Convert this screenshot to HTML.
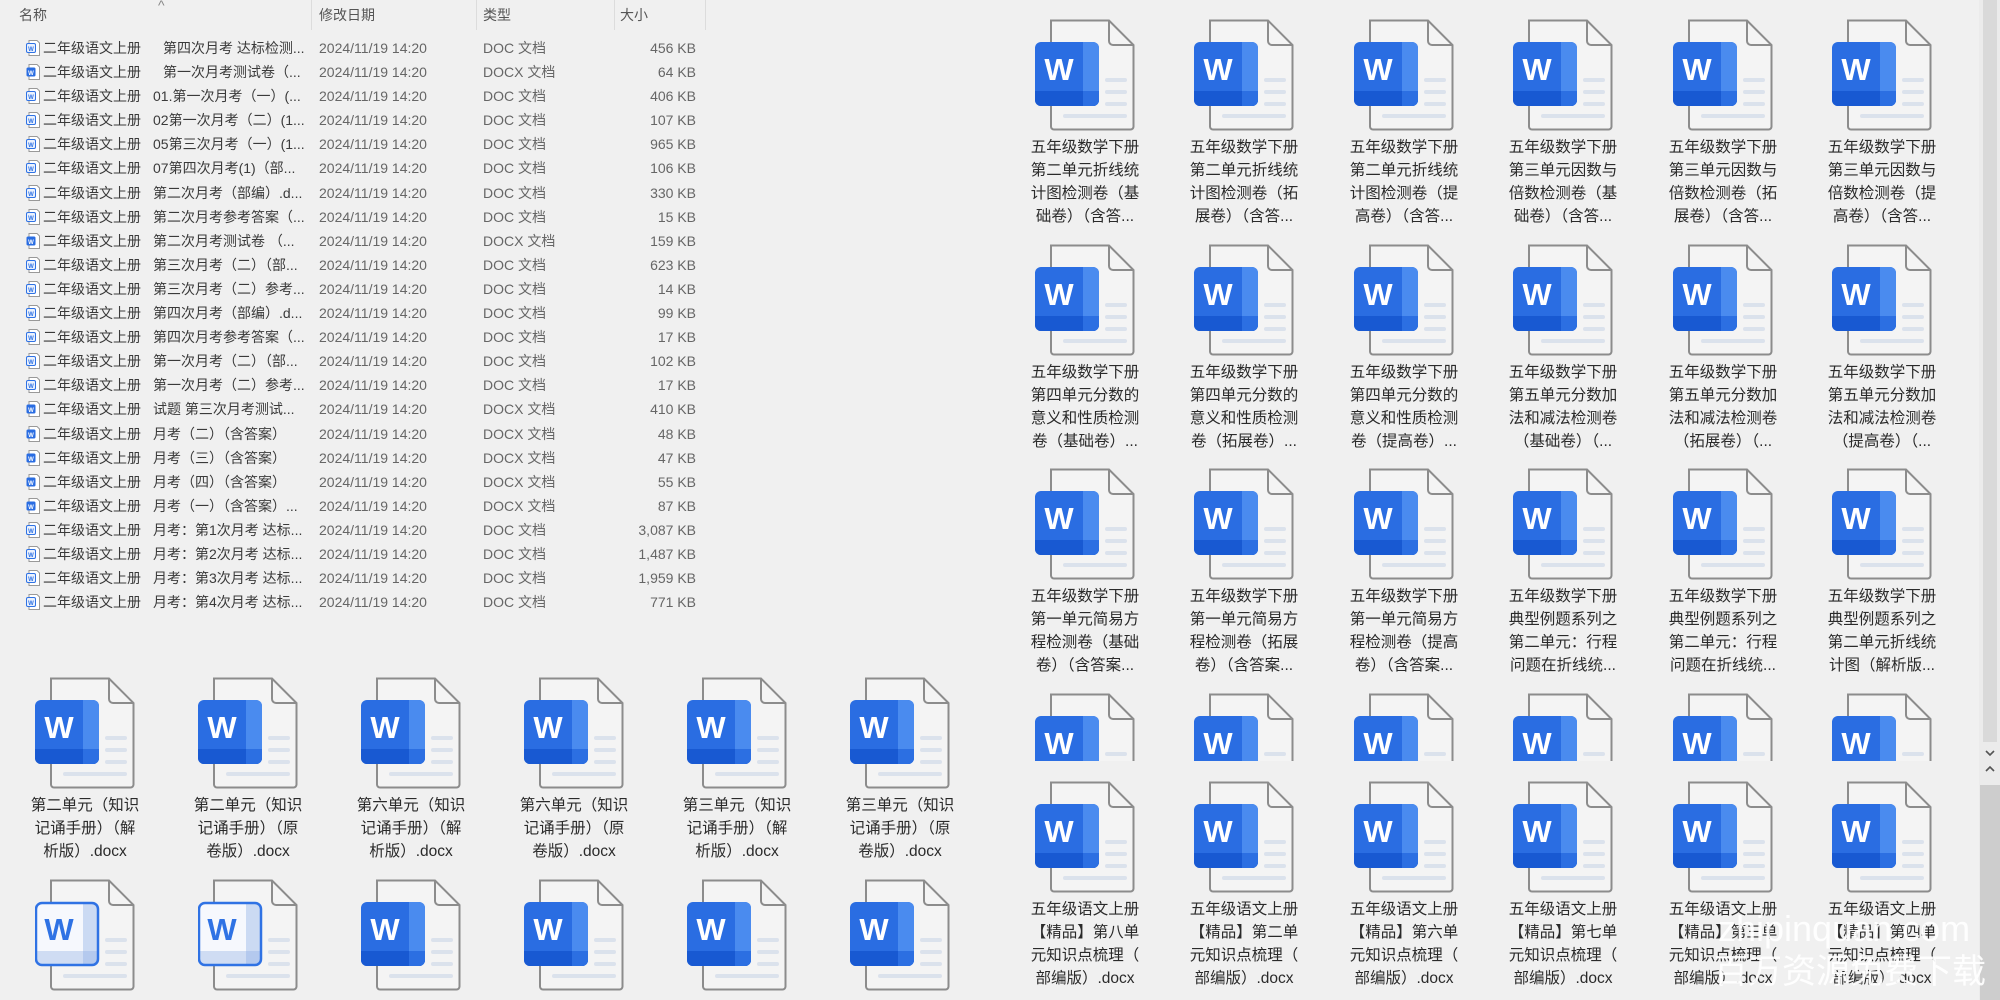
<!DOCTYPE html>
<html style="overflow:hidden"><head><meta charset="utf-8">
<style>
html,body{overflow:hidden}
body{margin:0;width:2000px;height:1000px;background:#f0f0f0;position:relative;overflow:hidden;font-family:"Liberation Sans","Noto Sans CJK SC",sans-serif;}
.hd{position:absolute;top:6px;font-size:14px;color:#555;line-height:18px}
.sep{position:absolute;top:0;width:1px;height:30px;background:#dcdcdc}
#list{position:absolute;top:36px;left:0;width:720px}
.r{position:relative;height:24.1px;line-height:24px;font-size:14px;color:#3a3a3a;white-space:nowrap}
.r span{position:absolute;top:0}
.r .d,.r .t{color:#666}
.r .s{right:24px;color:#666}
.r svg{position:absolute;left:26px;top:4px}
.it{position:absolute;width:170px;text-align:center}
.it svg{display:block;margin:0 auto}
.it div{margin-top:5px;font-size:15.5px;line-height:23px;color:#2a2a2a}
.clip{position:absolute;overflow:hidden}
.wm{position:absolute;white-space:nowrap;color:rgba(255,255,255,0.92);line-height:44px}
</style></head><body>
<svg width="0" height="0" style="position:absolute">
<defs>
<clipPath id="cr"><rect x="0" y="23" width="64" height="64" rx="6"/></clipPath>
<symbol id="pg" viewBox="0 0 100 112">
<path d="M16 1.5H74L98.5 26V107.5a3 3 0 0 1-3 3H19a3 3 0 0 1-3-3Z" fill="#f4f4f4" stroke="#8c8c8c" stroke-width="2"/>
<path d="M74 1.5V22a4 4 0 0 0 4 4H98.5" fill="none" stroke="#8c8c8c" stroke-width="2"/>
<rect x="70" y="59" width="22" height="4" rx="2" fill="#dbe2ec"/>
<rect x="70" y="71" width="22" height="4" rx="2" fill="#dbe2ec"/>
<rect x="70" y="83" width="22" height="4" rx="2" fill="#dbe2ec"/>
<rect x="28" y="95" width="64" height="4" rx="2" fill="#dbe2ec"/>
</symbol>
<symbol id="bw" viewBox="0 0 100 112">
<g clip-path="url(#cr)">
<rect x="0" y="23" width="64" height="64" fill="#2a6de2"/>
<rect x="48" y="23" width="16" height="64" fill="#4a8bef"/>
<rect x="0" y="72" width="64" height="15" fill="#1859d2"/>
<rect x="48" y="72" width="16" height="15" fill="#2c6fe2"/>
</g>
</symbol>
<symbol id="bo" viewBox="0 0 100 112">
<g clip-path="url(#cr)">
<rect x="0" y="23" width="64" height="64" fill="#f6f8fd"/>
<rect x="48" y="23" width="16" height="64" fill="#cbdaf3"/>
<rect x="0" y="72" width="64" height="15" fill="#cfdcf3"/>
<rect x="48" y="72" width="16" height="15" fill="#b4c9ee"/>
</g>
<rect x="1" y="24" width="62" height="62" rx="6" fill="none" stroke="#2f72e4" stroke-width="2.5"/>
</symbol>
<symbol id="sd" viewBox="0 0 14 16">
<path d="M3 .5H11L13.5 3V15.5H3Z" fill="#fff" stroke="#999" stroke-width="1"/>
<rect x=".5" y="3.5" width="9" height="9" rx="1.5" fill="#eaf1fd" stroke="#2f72e4"/>
</symbol>
<symbol id="sx" viewBox="0 0 14 16">
<path d="M3 .5H11L13.5 3V15.5H3Z" fill="#fff" stroke="#999" stroke-width="1"/>
<rect x=".5" y="3.5" width="9" height="9" rx="1.5" fill="#2a6de2"/>
</symbol>
</defs></svg>

<div class="hd" style="left:19px">名称</div>
<div class="hd" style="left:158px;top:-4px;color:#888">^</div>
<div class="hd" style="left:319px">修改日期</div>
<div class="hd" style="left:483px">类型</div>
<div class="hd" style="left:620px">大小</div>
<div class="sep" style="left:311px"></div><div class="sep" style="left:476px"></div><div class="sep" style="left:614px"></div><div class="sep" style="left:705px"></div>

<div id="list">
<div class="r"><svg width="14" height="16"><use href="#sd"/><text x="5" y="11" font-size="6" font-weight="bold" fill="#2f72e4" text-anchor="middle">W</text></svg><span style="left:43px">二年级语文上册</span><span style="left:163px">第四次月考 达标检测...</span><span class="d" style="left:319px">2024/11/19 14:20</span><span class="t" style="left:483px">DOC 文档</span><span class="s">456 KB</span></div>
<div class="r"><svg width="14" height="16"><use href="#sx"/><text x="5" y="11" font-size="6" font-weight="bold" fill="#fff" text-anchor="middle">W</text></svg><span style="left:43px">二年级语文上册</span><span style="left:163px">第一次月考测试卷（...</span><span class="d" style="left:319px">2024/11/19 14:20</span><span class="t" style="left:483px">DOCX 文档</span><span class="s">64 KB</span></div>
<div class="r"><svg width="14" height="16"><use href="#sd"/><text x="5" y="11" font-size="6" font-weight="bold" fill="#2f72e4" text-anchor="middle">W</text></svg><span style="left:43px">二年级语文上册</span><span style="left:153px">01.第一次月考（一）(...</span><span class="d" style="left:319px">2024/11/19 14:20</span><span class="t" style="left:483px">DOC 文档</span><span class="s">406 KB</span></div>
<div class="r"><svg width="14" height="16"><use href="#sd"/><text x="5" y="11" font-size="6" font-weight="bold" fill="#2f72e4" text-anchor="middle">W</text></svg><span style="left:43px">二年级语文上册</span><span style="left:153px">02第一次月考（二）(1...</span><span class="d" style="left:319px">2024/11/19 14:20</span><span class="t" style="left:483px">DOC 文档</span><span class="s">107 KB</span></div>
<div class="r"><svg width="14" height="16"><use href="#sd"/><text x="5" y="11" font-size="6" font-weight="bold" fill="#2f72e4" text-anchor="middle">W</text></svg><span style="left:43px">二年级语文上册</span><span style="left:153px">05第三次月考（一）(1...</span><span class="d" style="left:319px">2024/11/19 14:20</span><span class="t" style="left:483px">DOC 文档</span><span class="s">965 KB</span></div>
<div class="r"><svg width="14" height="16"><use href="#sd"/><text x="5" y="11" font-size="6" font-weight="bold" fill="#2f72e4" text-anchor="middle">W</text></svg><span style="left:43px">二年级语文上册</span><span style="left:153px">07第四次月考(1)（部...</span><span class="d" style="left:319px">2024/11/19 14:20</span><span class="t" style="left:483px">DOC 文档</span><span class="s">106 KB</span></div>
<div class="r"><svg width="14" height="16"><use href="#sd"/><text x="5" y="11" font-size="6" font-weight="bold" fill="#2f72e4" text-anchor="middle">W</text></svg><span style="left:43px">二年级语文上册</span><span style="left:153px">第二次月考（部编）.d...</span><span class="d" style="left:319px">2024/11/19 14:20</span><span class="t" style="left:483px">DOC 文档</span><span class="s">330 KB</span></div>
<div class="r"><svg width="14" height="16"><use href="#sd"/><text x="5" y="11" font-size="6" font-weight="bold" fill="#2f72e4" text-anchor="middle">W</text></svg><span style="left:43px">二年级语文上册</span><span style="left:153px">第二次月考参考答案（...</span><span class="d" style="left:319px">2024/11/19 14:20</span><span class="t" style="left:483px">DOC 文档</span><span class="s">15 KB</span></div>
<div class="r"><svg width="14" height="16"><use href="#sx"/><text x="5" y="11" font-size="6" font-weight="bold" fill="#fff" text-anchor="middle">W</text></svg><span style="left:43px">二年级语文上册</span><span style="left:153px">第二次月考测试卷 （...</span><span class="d" style="left:319px">2024/11/19 14:20</span><span class="t" style="left:483px">DOCX 文档</span><span class="s">159 KB</span></div>
<div class="r"><svg width="14" height="16"><use href="#sd"/><text x="5" y="11" font-size="6" font-weight="bold" fill="#2f72e4" text-anchor="middle">W</text></svg><span style="left:43px">二年级语文上册</span><span style="left:153px">第三次月考（二）（部...</span><span class="d" style="left:319px">2024/11/19 14:20</span><span class="t" style="left:483px">DOC 文档</span><span class="s">623 KB</span></div>
<div class="r"><svg width="14" height="16"><use href="#sd"/><text x="5" y="11" font-size="6" font-weight="bold" fill="#2f72e4" text-anchor="middle">W</text></svg><span style="left:43px">二年级语文上册</span><span style="left:153px">第三次月考（二）参考...</span><span class="d" style="left:319px">2024/11/19 14:20</span><span class="t" style="left:483px">DOC 文档</span><span class="s">14 KB</span></div>
<div class="r"><svg width="14" height="16"><use href="#sd"/><text x="5" y="11" font-size="6" font-weight="bold" fill="#2f72e4" text-anchor="middle">W</text></svg><span style="left:43px">二年级语文上册</span><span style="left:153px">第四次月考（部编）.d...</span><span class="d" style="left:319px">2024/11/19 14:20</span><span class="t" style="left:483px">DOC 文档</span><span class="s">99 KB</span></div>
<div class="r"><svg width="14" height="16"><use href="#sd"/><text x="5" y="11" font-size="6" font-weight="bold" fill="#2f72e4" text-anchor="middle">W</text></svg><span style="left:43px">二年级语文上册</span><span style="left:153px">第四次月考参考答案（...</span><span class="d" style="left:319px">2024/11/19 14:20</span><span class="t" style="left:483px">DOC 文档</span><span class="s">17 KB</span></div>
<div class="r"><svg width="14" height="16"><use href="#sd"/><text x="5" y="11" font-size="6" font-weight="bold" fill="#2f72e4" text-anchor="middle">W</text></svg><span style="left:43px">二年级语文上册</span><span style="left:153px">第一次月考（二）（部...</span><span class="d" style="left:319px">2024/11/19 14:20</span><span class="t" style="left:483px">DOC 文档</span><span class="s">102 KB</span></div>
<div class="r"><svg width="14" height="16"><use href="#sd"/><text x="5" y="11" font-size="6" font-weight="bold" fill="#2f72e4" text-anchor="middle">W</text></svg><span style="left:43px">二年级语文上册</span><span style="left:153px">第一次月考（二）参考...</span><span class="d" style="left:319px">2024/11/19 14:20</span><span class="t" style="left:483px">DOC 文档</span><span class="s">17 KB</span></div>
<div class="r"><svg width="14" height="16"><use href="#sx"/><text x="5" y="11" font-size="6" font-weight="bold" fill="#fff" text-anchor="middle">W</text></svg><span style="left:43px">二年级语文上册</span><span style="left:153px">试题 第三次月考测试...</span><span class="d" style="left:319px">2024/11/19 14:20</span><span class="t" style="left:483px">DOCX 文档</span><span class="s">410 KB</span></div>
<div class="r"><svg width="14" height="16"><use href="#sx"/><text x="5" y="11" font-size="6" font-weight="bold" fill="#fff" text-anchor="middle">W</text></svg><span style="left:43px">二年级语文上册</span><span style="left:153px">月考（二）（含答案）</span><span class="d" style="left:319px">2024/11/19 14:20</span><span class="t" style="left:483px">DOCX 文档</span><span class="s">48 KB</span></div>
<div class="r"><svg width="14" height="16"><use href="#sx"/><text x="5" y="11" font-size="6" font-weight="bold" fill="#fff" text-anchor="middle">W</text></svg><span style="left:43px">二年级语文上册</span><span style="left:153px">月考（三）（含答案）</span><span class="d" style="left:319px">2024/11/19 14:20</span><span class="t" style="left:483px">DOCX 文档</span><span class="s">47 KB</span></div>
<div class="r"><svg width="14" height="16"><use href="#sx"/><text x="5" y="11" font-size="6" font-weight="bold" fill="#fff" text-anchor="middle">W</text></svg><span style="left:43px">二年级语文上册</span><span style="left:153px">月考（四）（含答案）</span><span class="d" style="left:319px">2024/11/19 14:20</span><span class="t" style="left:483px">DOCX 文档</span><span class="s">55 KB</span></div>
<div class="r"><svg width="14" height="16"><use href="#sx"/><text x="5" y="11" font-size="6" font-weight="bold" fill="#fff" text-anchor="middle">W</text></svg><span style="left:43px">二年级语文上册</span><span style="left:153px">月考（一）（含答案）...</span><span class="d" style="left:319px">2024/11/19 14:20</span><span class="t" style="left:483px">DOCX 文档</span><span class="s">87 KB</span></div>
<div class="r"><svg width="14" height="16"><use href="#sd"/><text x="5" y="11" font-size="6" font-weight="bold" fill="#2f72e4" text-anchor="middle">W</text></svg><span style="left:43px">二年级语文上册</span><span style="left:153px">月考：第1次月考 达标...</span><span class="d" style="left:319px">2024/11/19 14:20</span><span class="t" style="left:483px">DOC 文档</span><span class="s">3,087 KB</span></div>
<div class="r"><svg width="14" height="16"><use href="#sd"/><text x="5" y="11" font-size="6" font-weight="bold" fill="#2f72e4" text-anchor="middle">W</text></svg><span style="left:43px">二年级语文上册</span><span style="left:153px">月考：第2次月考 达标...</span><span class="d" style="left:319px">2024/11/19 14:20</span><span class="t" style="left:483px">DOC 文档</span><span class="s">1,487 KB</span></div>
<div class="r"><svg width="14" height="16"><use href="#sd"/><text x="5" y="11" font-size="6" font-weight="bold" fill="#2f72e4" text-anchor="middle">W</text></svg><span style="left:43px">二年级语文上册</span><span style="left:153px">月考：第3次月考 达标...</span><span class="d" style="left:319px">2024/11/19 14:20</span><span class="t" style="left:483px">DOC 文档</span><span class="s">1,959 KB</span></div>
<div class="r"><svg width="14" height="16"><use href="#sd"/><text x="5" y="11" font-size="6" font-weight="bold" fill="#2f72e4" text-anchor="middle">W</text></svg><span style="left:43px">二年级语文上册</span><span style="left:153px">月考：第4次月考 达标...</span><span class="d" style="left:319px">2024/11/19 14:20</span><span class="t" style="left:483px">DOC 文档</span><span class="s">771 KB</span></div>
</div>

<!-- left grid -->
<div class="it" style="left:0px;top:677px"><svg width="100" height="112"><use href="#pg"/><use href="#bw"/><text x="24" y="61" font-size="31" font-weight="bold" fill="#fff" text-anchor="middle">W</text></svg><div>第二单元（知识<br>记诵手册）（解<br>析版）.docx</div></div>
<div class="it" style="left:163px;top:677px"><svg width="100" height="112"><use href="#pg"/><use href="#bw"/><text x="24" y="61" font-size="31" font-weight="bold" fill="#fff" text-anchor="middle">W</text></svg><div>第二单元（知识<br>记诵手册）（原<br>卷版）.docx</div></div>
<div class="it" style="left:326px;top:677px"><svg width="100" height="112"><use href="#pg"/><use href="#bw"/><text x="24" y="61" font-size="31" font-weight="bold" fill="#fff" text-anchor="middle">W</text></svg><div>第六单元（知识<br>记诵手册）（解<br>析版）.docx</div></div>
<div class="it" style="left:489px;top:677px"><svg width="100" height="112"><use href="#pg"/><use href="#bw"/><text x="24" y="61" font-size="31" font-weight="bold" fill="#fff" text-anchor="middle">W</text></svg><div>第六单元（知识<br>记诵手册）（原<br>卷版）.docx</div></div>
<div class="it" style="left:652px;top:677px"><svg width="100" height="112"><use href="#pg"/><use href="#bw"/><text x="24" y="61" font-size="31" font-weight="bold" fill="#fff" text-anchor="middle">W</text></svg><div>第三单元（知识<br>记诵手册）（解<br>析版）.docx</div></div>
<div class="it" style="left:815px;top:677px"><svg width="100" height="112"><use href="#pg"/><use href="#bw"/><text x="24" y="61" font-size="31" font-weight="bold" fill="#fff" text-anchor="middle">W</text></svg><div>第三单元（知识<br>记诵手册）（原<br>卷版）.docx</div></div>
<div class="it" style="left:0px;top:879px"><svg width="100" height="112"><use href="#pg"/><use href="#bo"/><text x="24" y="61" font-size="31" font-weight="bold" fill="#2f72e4" text-anchor="middle">W</text></svg></div>
<div class="it" style="left:163px;top:879px"><svg width="100" height="112"><use href="#pg"/><use href="#bo"/><text x="24" y="61" font-size="31" font-weight="bold" fill="#2f72e4" text-anchor="middle">W</text></svg></div>
<div class="it" style="left:326px;top:879px"><svg width="100" height="112"><use href="#pg"/><use href="#bw"/><text x="24" y="61" font-size="31" font-weight="bold" fill="#fff" text-anchor="middle">W</text></svg></div>
<div class="it" style="left:489px;top:879px"><svg width="100" height="112"><use href="#pg"/><use href="#bw"/><text x="24" y="61" font-size="31" font-weight="bold" fill="#fff" text-anchor="middle">W</text></svg></div>
<div class="it" style="left:652px;top:879px"><svg width="100" height="112"><use href="#pg"/><use href="#bw"/><text x="24" y="61" font-size="31" font-weight="bold" fill="#fff" text-anchor="middle">W</text></svg></div>
<div class="it" style="left:815px;top:879px"><svg width="100" height="112"><use href="#pg"/><use href="#bw"/><text x="24" y="61" font-size="31" font-weight="bold" fill="#fff" text-anchor="middle">W</text></svg></div>

<!-- right grid rows 1-4 -->
<div class="clip" style="left:990px;top:0;width:985px;height:761px">
<div class="it" style="left:10px;top:19px"><svg width="100" height="112"><use href="#pg"/><use href="#bw"/><text x="24" y="61" font-size="31" font-weight="bold" fill="#fff" text-anchor="middle">W</text></svg><div>五年级数学下册<br>第二单元折线统<br>计图检测卷（基<br>础卷）（含答...</div></div>
<div class="it" style="left:169px;top:19px"><svg width="100" height="112"><use href="#pg"/><use href="#bw"/><text x="24" y="61" font-size="31" font-weight="bold" fill="#fff" text-anchor="middle">W</text></svg><div>五年级数学下册<br>第二单元折线统<br>计图检测卷（拓<br>展卷）（含答...</div></div>
<div class="it" style="left:329px;top:19px"><svg width="100" height="112"><use href="#pg"/><use href="#bw"/><text x="24" y="61" font-size="31" font-weight="bold" fill="#fff" text-anchor="middle">W</text></svg><div>五年级数学下册<br>第二单元折线统<br>计图检测卷（提<br>高卷）（含答...</div></div>
<div class="it" style="left:488px;top:19px"><svg width="100" height="112"><use href="#pg"/><use href="#bw"/><text x="24" y="61" font-size="31" font-weight="bold" fill="#fff" text-anchor="middle">W</text></svg><div>五年级数学下册<br>第三单元因数与<br>倍数检测卷（基<br>础卷）（含答...</div></div>
<div class="it" style="left:648px;top:19px"><svg width="100" height="112"><use href="#pg"/><use href="#bw"/><text x="24" y="61" font-size="31" font-weight="bold" fill="#fff" text-anchor="middle">W</text></svg><div>五年级数学下册<br>第三单元因数与<br>倍数检测卷（拓<br>展卷）（含答...</div></div>
<div class="it" style="left:807px;top:19px"><svg width="100" height="112"><use href="#pg"/><use href="#bw"/><text x="24" y="61" font-size="31" font-weight="bold" fill="#fff" text-anchor="middle">W</text></svg><div>五年级数学下册<br>第三单元因数与<br>倍数检测卷（提<br>高卷）（含答...</div></div>

<div class="it" style="left:10px;top:244px"><svg width="100" height="112"><use href="#pg"/><use href="#bw"/><text x="24" y="61" font-size="31" font-weight="bold" fill="#fff" text-anchor="middle">W</text></svg><div>五年级数学下册<br>第四单元分数的<br>意义和性质检测<br>卷（基础卷）...</div></div>
<div class="it" style="left:169px;top:244px"><svg width="100" height="112"><use href="#pg"/><use href="#bw"/><text x="24" y="61" font-size="31" font-weight="bold" fill="#fff" text-anchor="middle">W</text></svg><div>五年级数学下册<br>第四单元分数的<br>意义和性质检测<br>卷（拓展卷）...</div></div>
<div class="it" style="left:329px;top:244px"><svg width="100" height="112"><use href="#pg"/><use href="#bw"/><text x="24" y="61" font-size="31" font-weight="bold" fill="#fff" text-anchor="middle">W</text></svg><div>五年级数学下册<br>第四单元分数的<br>意义和性质检测<br>卷（提高卷）...</div></div>
<div class="it" style="left:488px;top:244px"><svg width="100" height="112"><use href="#pg"/><use href="#bw"/><text x="24" y="61" font-size="31" font-weight="bold" fill="#fff" text-anchor="middle">W</text></svg><div>五年级数学下册<br>第五单元分数加<br>法和减法检测卷<br>（基础卷）（...</div></div>
<div class="it" style="left:648px;top:244px"><svg width="100" height="112"><use href="#pg"/><use href="#bw"/><text x="24" y="61" font-size="31" font-weight="bold" fill="#fff" text-anchor="middle">W</text></svg><div>五年级数学下册<br>第五单元分数加<br>法和减法检测卷<br>（拓展卷）（...</div></div>
<div class="it" style="left:807px;top:244px"><svg width="100" height="112"><use href="#pg"/><use href="#bw"/><text x="24" y="61" font-size="31" font-weight="bold" fill="#fff" text-anchor="middle">W</text></svg><div>五年级数学下册<br>第五单元分数加<br>法和减法检测卷<br>（提高卷）（...</div></div>

<div class="it" style="left:10px;top:468px"><svg width="100" height="112"><use href="#pg"/><use href="#bw"/><text x="24" y="61" font-size="31" font-weight="bold" fill="#fff" text-anchor="middle">W</text></svg><div>五年级数学下册<br>第一单元简易方<br>程检测卷（基础<br>卷）（含答案...</div></div>
<div class="it" style="left:169px;top:468px"><svg width="100" height="112"><use href="#pg"/><use href="#bw"/><text x="24" y="61" font-size="31" font-weight="bold" fill="#fff" text-anchor="middle">W</text></svg><div>五年级数学下册<br>第一单元简易方<br>程检测卷（拓展<br>卷）（含答案...</div></div>
<div class="it" style="left:329px;top:468px"><svg width="100" height="112"><use href="#pg"/><use href="#bw"/><text x="24" y="61" font-size="31" font-weight="bold" fill="#fff" text-anchor="middle">W</text></svg><div>五年级数学下册<br>第一单元简易方<br>程检测卷（提高<br>卷）（含答案...</div></div>
<div class="it" style="left:488px;top:468px"><svg width="100" height="112"><use href="#pg"/><use href="#bw"/><text x="24" y="61" font-size="31" font-weight="bold" fill="#fff" text-anchor="middle">W</text></svg><div>五年级数学下册<br>典型例题系列之<br>第二单元：行程<br>问题在折线统...</div></div>
<div class="it" style="left:648px;top:468px"><svg width="100" height="112"><use href="#pg"/><use href="#bw"/><text x="24" y="61" font-size="31" font-weight="bold" fill="#fff" text-anchor="middle">W</text></svg><div>五年级数学下册<br>典型例题系列之<br>第二单元：行程<br>问题在折线统...</div></div>
<div class="it" style="left:807px;top:468px"><svg width="100" height="112"><use href="#pg"/><use href="#bw"/><text x="24" y="61" font-size="31" font-weight="bold" fill="#fff" text-anchor="middle">W</text></svg><div>五年级数学下册<br>典型例题系列之<br>第二单元折线统<br>计图（解析版...</div></div>

<div class="it" style="left:10px;top:693px"><svg width="100" height="112"><use href="#pg"/><use href="#bw"/><text x="24" y="61" font-size="31" font-weight="bold" fill="#fff" text-anchor="middle">W</text></svg></div>
<div class="it" style="left:169px;top:693px"><svg width="100" height="112"><use href="#pg"/><use href="#bw"/><text x="24" y="61" font-size="31" font-weight="bold" fill="#fff" text-anchor="middle">W</text></svg></div>
<div class="it" style="left:329px;top:693px"><svg width="100" height="112"><use href="#pg"/><use href="#bw"/><text x="24" y="61" font-size="31" font-weight="bold" fill="#fff" text-anchor="middle">W</text></svg></div>
<div class="it" style="left:488px;top:693px"><svg width="100" height="112"><use href="#pg"/><use href="#bw"/><text x="24" y="61" font-size="31" font-weight="bold" fill="#fff" text-anchor="middle">W</text></svg></div>
<div class="it" style="left:648px;top:693px"><svg width="100" height="112"><use href="#pg"/><use href="#bw"/><text x="24" y="61" font-size="31" font-weight="bold" fill="#fff" text-anchor="middle">W</text></svg></div>
<div class="it" style="left:807px;top:693px"><svg width="100" height="112"><use href="#pg"/><use href="#bw"/><text x="24" y="61" font-size="31" font-weight="bold" fill="#fff" text-anchor="middle">W</text></svg></div>
</div>

<!-- right row 5 -->
<div class="it" style="left:1000px;top:781px"><svg width="100" height="112"><use href="#pg"/><use href="#bw"/><text x="24" y="61" font-size="31" font-weight="bold" fill="#fff" text-anchor="middle">W</text></svg><div>五年级语文上册<br>【精品】第八单<br>元知识点梳理（<br>部编版）.docx</div></div>
<div class="it" style="left:1159px;top:781px"><svg width="100" height="112"><use href="#pg"/><use href="#bw"/><text x="24" y="61" font-size="31" font-weight="bold" fill="#fff" text-anchor="middle">W</text></svg><div>五年级语文上册<br>【精品】第二单<br>元知识点梳理（<br>部编版）.docx</div></div>
<div class="it" style="left:1319px;top:781px"><svg width="100" height="112"><use href="#pg"/><use href="#bw"/><text x="24" y="61" font-size="31" font-weight="bold" fill="#fff" text-anchor="middle">W</text></svg><div>五年级语文上册<br>【精品】第六单<br>元知识点梳理（<br>部编版）.docx</div></div>
<div class="it" style="left:1478px;top:781px"><svg width="100" height="112"><use href="#pg"/><use href="#bw"/><text x="24" y="61" font-size="31" font-weight="bold" fill="#fff" text-anchor="middle">W</text></svg><div>五年级语文上册<br>【精品】第七单<br>元知识点梳理（<br>部编版）.docx</div></div>
<div class="it" style="left:1638px;top:781px"><svg width="100" height="112"><use href="#pg"/><use href="#bw"/><text x="24" y="61" font-size="31" font-weight="bold" fill="#fff" text-anchor="middle">W</text></svg><div>五年级语文上册<br>【精品】第三单<br>元知识点梳理（<br>部编版）.docx</div></div>
<div class="it" style="left:1797px;top:781px"><svg width="100" height="112"><use href="#pg"/><use href="#bw"/><text x="24" y="61" font-size="31" font-weight="bold" fill="#fff" text-anchor="middle">W</text></svg><div>五年级语文上册<br>【精品】第四单<br>元知识点梳理（<br>部编版）.docx</div></div>

<!-- scrollbar -->
<div style="position:absolute;left:1979px;top:0;width:21px;height:1000px;background:#ebebeb"></div>
<div style="position:absolute;left:1983px;top:0;width:14px;height:742px;background:#d9d9d9"></div>
<svg style="position:absolute;left:1980px;top:744px" width="20" height="36"><path d="M6 7l4 4 4-4" fill="none" stroke="#555" stroke-width="1.6"/><path d="M6 27l4-4 4 4" fill="none" stroke="#555" stroke-width="1.6"/></svg>
<div style="position:absolute;left:1980px;top:785px;width:20px;height:215px;background:#cdcdcd"></div>

<!-- watermark -->
<div class="wm" style="left:1718px;top:907px;font-size:36px;font-family:'Liberation Sans',sans-serif">zhipinquan.com</div>
<div class="wm" style="left:1714px;top:950px;font-size:34px;font-family:'Liberation Sans','Noto Sans CJK SC',sans-serif">百万资源免费下载</div>
</body></html>
